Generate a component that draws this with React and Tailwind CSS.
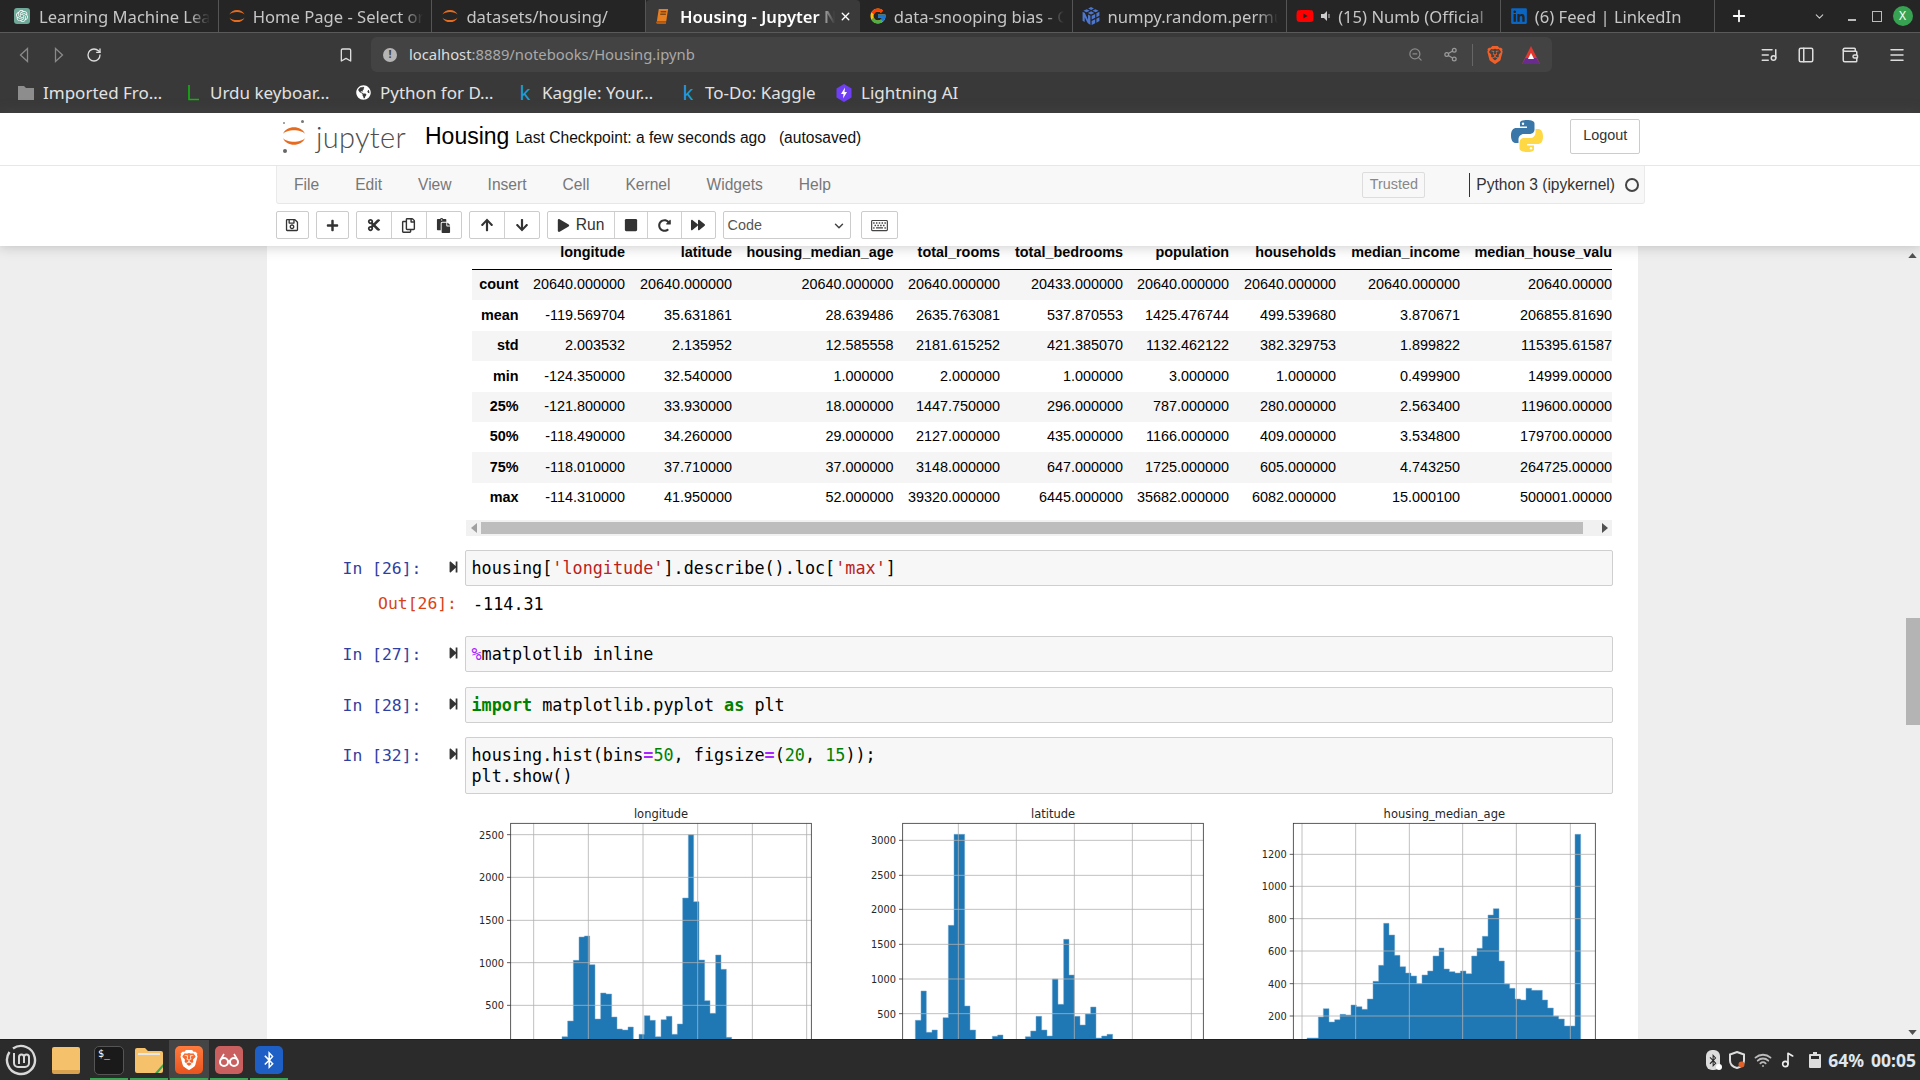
import {
  Bookmark,
  ChevronDown,
  ListMusic,
  Menu,
  Music2,
  PanelLeft,
  Plus,
  RotateCw,
  Share2,
  Wallet,
  Wifi,
  X,
  ZoomOut,
} from "lucide-react";
import {
  FaArrowDown,
  FaArrowUp,
  FaBluetoothB,
  FaCut,
  FaForward,
  FaGlobeAmericas,
  FaLinkedin,
  FaPaste,
  FaPlay,
  FaPlus,
  FaRedoAlt,
  FaRegCopy,
  FaRegKeyboard,
  FaRegSave,
  FaStepForward,
  FaStop,
  FaYoutube,
} from "react-icons/fa";
import { FcGoogle } from "react-icons/fc";
import { SiBrave, SiNumpy, SiOpenai } from "react-icons/si";

const UI_FONT = "font-['Noto_Sans',sans-serif]";
const NB_FONT = "font-['Liberation_Sans',Arial,sans-serif]";
const MONO_FONT = "font-['DejaVu_Sans_Mono',monospace]";

function JupyterArcs({ className }) {
  return (
    <svg viewBox="0 0 26 26" className={className}>
      <path d="M2 11C5 2 21 2 24 11C20 6 6 6 2 11Z" fill="#e66b1f" />
      <path d="M2 15C5 24 21 24 24 15C20 20 6 20 2 15Z" fill="#e66b1f" />
    </svg>
  );
}

const TABS = [
  {
    title: "Learning Machine Lea",
    icon: (
      <span className="flex h-4 w-4 items-center justify-center rounded-[3px] bg-[#6ea999]">
        <SiOpenai className="h-3 w-3 text-white" />
      </span>
    ),
  },
  { title: "Home Page - Select or", icon: <JupyterArcs className="h-[18px] w-[18px]" /> },
  { title: "datasets/housing/", icon: <JupyterArcs className="h-[18px] w-[18px]" /> },
  {
    title: "Housing - Jupyter N",
    active: true,
    icon: (
      <svg viewBox="0 0 16 18" className="h-[17px] w-[15px]">
        <path d="M4 1h10l-2 13H2z" fill="#e67e22" />
        <path d="M2 14h10l-.4 3H2.6a1.6 1.6 0 0 1-.6-3z" fill="#b85c12" />
        <path d="M6 4h6M5.6 6.5h6" stroke="#40260c" strokeWidth="1" />
      </svg>
    ),
  },
  { title: "data-snooping bias - G", icon: <FcGoogle className="h-[18px] w-[18px]" /> },
  { title: "numpy.random.permu", icon: <SiNumpy className="h-[18px] w-[18px] text-[#4d77cf]" /> },
  {
    title: "(15) Numb (Official",
    sound: true,
    icon: <FaYoutube className="h-[18px] w-[18px] text-[#f00]" />,
  },
  { title: "(6) Feed | LinkedIn", icon: <FaLinkedin className="h-[18px] w-[18px] text-[#0a66c2]" /> },
];

function Tab({ tab }) {
  return (
    <div
      className={`flex h-[32px] w-[213.7px] shrink-0 items-center overflow-hidden pl-[9px] pr-2 ${
        tab.active
          ? "rounded-t-[4px] bg-[#3a3a3a] text-white"
          : "border-r border-r-[#555] text-[#c6c6c6]"
      }`}
    >
      <span className="flex w-[25px] shrink-0 items-center">{tab.icon}</span>
      {tab.sound && (
        <svg viewBox="0 0 10 10" className="mr-[7px] h-[10px] w-[10px] shrink-0">
          <path d="M0 3h3l3-3v10L3 7H0z" fill="#ccc" />
          <path d="M8 3v4" stroke="#ccc" />
        </svg>
      )}
      <span
        className={`mt-[2px] min-w-0 flex-1 overflow-hidden whitespace-nowrap text-[16.6px] [mask-image:linear-gradient(to_right,black_88%,transparent)] ${
          tab.active ? "font-semibold" : ""
        }`}
      >
        {tab.title}
      </span>
      {tab.active && <X className="ml-1 h-[13px] w-[13px] shrink-0 text-white" strokeWidth={2.5} />}
    </div>
  );
}

function NavArrow({ flip, className }) {
  return (
    <svg viewBox="0 0 10 16" className={`h-[16px] w-[10px] ${className}`}>
      <path
        d={flip ? "M1.5 1.5L8.5 8L1.5 14.5Z" : "M8.5 1.5L1.5 8L8.5 14.5Z"}
        fill="none"
        stroke="#8a8a8a"
        strokeWidth="1.3"
      />
    </svg>
  );
}

const BOOKMARKS = [
  {
    label: "Imported Fro…",
    width: "w-[167px]",
    icon: (
      <svg viewBox="0 0 18 16" className="h-[16px] w-[18px]">
        <path d="M1 1h6l2 2h8v12H1z" fill="#8d8d8d" />
      </svg>
    ),
  },
  {
    label: "Urdu keyboar…",
    width: "w-[170px]",
    icon: (
      <svg viewBox="0 0 14 16" className="h-[16px] w-[14px]">
        <path d="M3 0v14.5h10" fill="none" stroke="#12b312" strokeWidth="1.6" />
      </svg>
    ),
  },
  { label: "Python for D…", width: "w-[162px]", icon: <FaGlobeAmericas className="h-[15px] w-[15px] text-white" /> },
  {
    label: "Kaggle: Your…",
    width: "w-[163px]",
    icon: <span className="font-['Liberation_Sans',sans-serif] text-[21px] leading-none text-[#1c9dd8]">k</span>,
  },
  {
    label: "To-Do: Kaggle",
    width: "w-[156px]",
    icon: <span className="font-['Liberation_Sans',sans-serif] text-[21px] leading-none text-[#1c9dd8]">k</span>,
  },
  {
    label: "Lightning AI",
    width: "w-[130px]",
    icon: (
      <svg viewBox="0 0 16 18" className="h-[18px] w-[16px]">
        <path d="M8 0l7.5 4.5v9L8 18 .5 13.5v-9z" fill="#6f3ff5" />
        <path d="M9 3.5L5 10h2.5L7 14.5 11 8H8.5z" fill="#fff" />
      </svg>
    ),
  },
];

function BrowserChrome() {
  return (
    <div className={`h-[113px] shrink-0 bg-[#393939] ${UI_FONT}`}>
      <div className="flex h-[33px] items-center border-b border-b-[#5a5a5a] bg-[#252525] pl-[5px]">
        {TABS.map((tab) => (
          <Tab key={tab.title} tab={tab} />
        ))}
        <Plus className="ml-[15px] h-[18px] w-[18px] text-white" strokeWidth={2.4} />
        <ChevronDown className="ml-[65px] h-[13px] w-[13px] text-[#ccc]" />
        <span className="ml-[22px] h-[2px] w-[8px] translate-y-[4px] bg-[#bbb]" />
        <span className="ml-[16px] h-[11px] w-[10px] border border-[#bbb]" />
        <span className="ml-[11px] flex h-[20px] w-[20px] items-center justify-center rounded-full bg-[#37a352] text-[12px] text-white">
          X
        </span>
      </div>
      <div className="flex h-[39px] items-center pt-[4px]">
        <NavArrow className="ml-[19px]" />
        <NavArrow flip className="ml-[25px]" />
        <RotateCw className="ml-[22px] h-[16px] w-[16px] text-[#ddd]" strokeWidth={2} />
        <Bookmark className="ml-[236px] h-[16px] w-[16px] text-[#ddd]" strokeWidth={2} />
        <div className="ml-[17px] flex h-[35px] w-[1181px] items-center rounded-[6px] bg-[#434343] pl-[12px]">
          <span className="flex h-[14px] w-[14px] items-center justify-center rounded-full bg-[#b5b5b5] text-[11px] font-bold text-[#434343]">
            !
          </span>
          <span className="ml-[12px] whitespace-nowrap text-[14.8px] text-[#a9a9a9]">
            <span className="text-[#dddddd]">localhost</span>:8889/notebooks/Housing.ipynb
          </span>
          <ZoomOut className="ml-auto h-[15px] w-[15px] text-[#8a8a8a]" />
          <Share2 className="ml-[20px] h-[15px] w-[15px] text-[#9a9a9a]" />
          <span className="ml-[14px] h-[22px] w-px bg-[#666]" />
          <SiBrave className="ml-[13px] h-[20px] w-[18px] text-[#f2602a]" />
          <svg viewBox="0 0 20 20" className="ml-[17px] mr-[11px] h-[20px] w-[20px]">
            <path d="M10 1L19 19H1z" fill="#e0382e" />
            <path d="M1 19l3.5-6h11l3.5 6z" fill="#6a2b8e" />
            <path d="M10 8l3 6H7z" fill="#fff" />
          </svg>
        </div>
        <ListMusic className="ml-[208px] h-[18px] w-[18px] text-[#ddd]" />
        <PanelLeft className="ml-[19px] h-[18px] w-[18px] text-[#ddd]" />
        <Wallet className="ml-[26px] h-[18px] w-[18px] text-[#ddd]" />
        <Menu className="ml-[29px] h-[18px] w-[18px] text-[#ddd]" />
      </div>
      <div className="flex h-[41px] items-center pl-[17px] text-[17px] text-[#e2e2e2]">
        {BOOKMARKS.map((b) => (
          <div key={b.label} className={`flex items-center gap-[8px] whitespace-nowrap ${b.width}`}>
            <span className="flex w-[18px] shrink-0 justify-center">{b.icon}</span>
            {b.label}
          </div>
        ))}
      </div>
    </div>
  );
}

function PythonLogo() {
  const blue = "M16.5 1C9.5 1 10 4 10 4v3.5h7V9H6.5C3 9 1 11.5 1 16.5S3 24 6 24h2.5v-3.7c0-3 2.5-5.3 5.3-5.3h6.4c2.3 0 4.3-2 4.3-4.2V4.5C24.5 2.5 22 1 16.5 1z";
  return (
    <svg viewBox="0 0 34 34" className="h-[34px] w-[34px]">
      <path d={blue} fill="#3a76a8" />
      <circle cx="13" cy="4.8" r="1.2" fill="#fff" />
      <g transform="rotate(180 17 17)">
        <path d={blue} fill="#ffd845" />
        <circle cx="13" cy="4.8" r="1.2" fill="#fff" />
      </g>
    </svg>
  );
}

function ToolBtn({ children, className = "" }) {
  return (
    <div className={`flex h-full items-center justify-center border-r border-r-[#d0d0d0] text-[#333] last:border-r-0 ${className}`}>
      {children}
    </div>
  );
}

function ToolGroup({ children, className = "" }) {
  return (
    <div className={`flex h-[28px] rounded-[2px] border border-[#ccc] bg-white ${className}`}>{children}</div>
  );
}

function NotebookHeader() {
  return (
    <div className={`relative z-10 h-[133px] shrink-0 bg-white shadow-[0_0_12px_1px_rgba(87,87,87,0.3)] ${NB_FONT}`}>
      <div className="flex h-[53px] items-center border-b border-b-[#e7e7e7] pb-[6px]">
        <div className="relative ml-[281px] h-[33px] w-[26px]">
          <JupyterArcs className="mt-[3px] h-[26px] w-[26px]" />
          <span className="absolute left-[20px] top-0 h-[3px] w-[3px] rounded-full bg-[#777]" />
          <span className="absolute bottom-0 left-[2px] h-[4px] w-[4px] rounded-full bg-[#666]" />
          <span className="absolute left-[2px] top-[2px] h-[2px] w-[2px] rounded-full bg-[#888]" />
        </div>
        <span className="ml-[9px] w-[109px] whitespace-nowrap font-['Lato',sans-serif] text-[29px] font-light leading-none tracking-[0.3px] text-[#4e4e4e]">
          jupyter
        </span>
        <span className="text-[23px] text-black">Housing</span>
        <span className="ml-[6px] mt-[4px] whitespace-nowrap text-[15.6px] text-[#111]">
          Last Checkpoint: a few seconds ago
        </span>
        <span className="ml-[13px] mt-[4px] whitespace-nowrap text-[15.6px] text-[#111]">(autosaved)</span>
        <div className="ml-[649px]">
          <PythonLogo />
        </div>
        <div className="ml-[26px] flex h-[35px] w-[70px] items-center justify-center rounded-[2px] border border-[#ccc] text-[14.4px] text-[#333]">
          Logout
        </div>
      </div>
      <div className="ml-[276px] flex h-[38px] w-[1369px] items-center rounded-b-[3px] border-x border-b border-x-[#eaeaea] border-b-[#e7e7e7] bg-[#f8f8f8] text-[15.6px] text-[#777]">
        <div className="ml-[17px] flex gap-[36px]">
          <span>File</span>
          <span>Edit</span>
          <span>View</span>
          <span>Insert</span>
          <span>Cell</span>
          <span>Kernel</span>
          <span>Widgets</span>
          <span>Help</span>
        </div>
        <div className="ml-auto flex h-[26px] w-[63px] items-center justify-center rounded-[2px] border border-[#ddd] text-[14.4px] text-[#888]">
          Trusted
        </div>
        <span className="ml-[44px] h-[24px] w-px bg-[#333]" />
        <span className="ml-[6px] whitespace-nowrap text-[#333]">Python 3 (ipykernel)</span>
        <span className="ml-[10px] mr-[5px] h-[14px] w-[14px] rounded-full border-2 border-[#444]" />
      </div>
      <div className="ml-[275.6px] mt-[7px] flex items-center gap-[7px]">
        <ToolGroup>
          <ToolBtn className="w-[31px]">
            <FaRegSave className="h-[14px] w-[14px]" />
          </ToolBtn>
        </ToolGroup>
        <ToolGroup>
          <ToolBtn className="w-[31px]">
            <FaPlus className="h-[13px] w-[13px]" />
          </ToolBtn>
        </ToolGroup>
        <ToolGroup>
          <ToolBtn className="w-[35px]">
            <FaCut className="h-[14px] w-[14px]" />
          </ToolBtn>
          <ToolBtn className="w-[35px]">
            <FaRegCopy className="h-[15px] w-[15px]" />
          </ToolBtn>
          <ToolBtn className="w-[34.5px]">
            <FaPaste className="h-[15px] w-[15px]" />
          </ToolBtn>
        </ToolGroup>
        <ToolGroup>
          <ToolBtn className="w-[34.5px]">
            <FaArrowUp className="h-[14px] w-[14px]" />
          </ToolBtn>
          <ToolBtn className="w-[34px]">
            <FaArrowDown className="h-[14px] w-[14px]" />
          </ToolBtn>
        </ToolGroup>
        <ToolGroup>
          <ToolBtn className="w-[67px] gap-[6px] text-[15.6px]">
            <FaPlay className="h-[13px] w-[13px]" />
            Run
          </ToolBtn>
          <ToolBtn className="w-[33px]">
            <FaStop className="h-[14px] w-[14px]" />
          </ToolBtn>
          <ToolBtn className="w-[34px]">
            <FaRedoAlt className="h-[13px] w-[13px]" />
          </ToolBtn>
          <ToolBtn className="w-[33px]">
            <FaForward className="h-[14px] w-[14px]" />
          </ToolBtn>
        </ToolGroup>
        <div className="flex h-[28px] w-[128px] items-center justify-between rounded-[2px] border border-[#ccc] bg-white pl-[4px] pr-[4px] pt-[1px] text-[14.4px] text-[#555]">
          Code
          <ChevronDown className="h-[14px] w-[14px] text-[#444]" strokeWidth={2.5} />
        </div>
        <div className="ml-[3px] flex h-[28px] w-[37px] items-center justify-center rounded-[2px] border border-[#ccc] bg-white text-[#444]">
          <FaRegKeyboard className="h-[15px] w-[17px]" />
        </div>
      </div>
    </div>
  );
}

const COL_WIDTHS = [
  "w-[53.7px]",
  "w-[106.5px]",
  "w-[107px]",
  "w-[161.6px]",
  "w-[106.4px]",
  "w-[123px]",
  "w-[106px]",
  "w-[107px]",
  "w-[124px]",
  "w-[160px]",
];
const COLUMNS = [
  "",
  "longitude",
  "latitude",
  "housing_median_age",
  "total_rooms",
  "total_bedrooms",
  "population",
  "households",
  "median_income",
  "median_house_value",
];
const ROWS = [
  ["count", "20640.000000", "20640.000000", "20640.000000", "20640.000000", "20433.000000", "20640.000000", "20640.000000", "20640.000000", "20640.000000"],
  ["mean", "-119.569704", "35.631861", "28.639486", "2635.763081", "537.870553", "1425.476744", "499.539680", "3.870671", "206855.816909"],
  ["std", "2.003532", "2.135952", "12.585558", "2181.615252", "421.385070", "1132.462122", "382.329753", "1.899822", "115395.615874"],
  ["min", "-124.350000", "32.540000", "1.000000", "2.000000", "1.000000", "3.000000", "1.000000", "0.499900", "14999.000000"],
  ["25%", "-121.800000", "33.930000", "18.000000", "1447.750000", "296.000000", "787.000000", "280.000000", "2.563400", "119600.000000"],
  ["50%", "-118.490000", "34.260000", "29.000000", "2127.000000", "435.000000", "1166.000000", "409.000000", "3.534800", "179700.000000"],
  ["75%", "-118.010000", "37.710000", "37.000000", "3148.000000", "647.000000", "1725.000000", "605.000000", "4.743250", "264725.000000"],
  ["max", "-114.310000", "41.950000", "52.000000", "39320.000000", "6445.000000", "35682.000000", "6082.000000", "15.000100", "500001.000000"],
];

function DescribeTable() {
  return (
    <div className={`ml-[205px] w-[1140px] overflow-hidden ${NB_FONT} text-[14.4px] text-black`}>
      <div className="flex h-[23px] items-start border-b-0">
        {COLUMNS.map((c, i) => (
          <div key={i} className={`shrink-0 whitespace-nowrap pr-[7.2px] text-right font-bold leading-[13px] ${COL_WIDTHS[i]}`}>
            {c}
          </div>
        ))}
      </div>
      <div className="h-px w-full bg-black" />
      {ROWS.map((row, r) => (
        <div key={row[0]} className={`flex h-[30.4px] items-center ${r % 2 === 0 ? "bg-[#f5f5f5]" : ""}`}>
          {row.map((cell, i) => (
            <div
              key={i}
              className={`shrink-0 whitespace-nowrap pr-[7.2px] text-right ${i === 0 ? "font-bold" : ""} ${COL_WIDTHS[i]}`}
            >
              {cell}
            </div>
          ))}
        </div>
      ))}
    </div>
  );
}

function TableScrollbar() {
  return (
    <div className="ml-[199px] mt-[7px] flex h-[16px] w-[1146px] items-center bg-[#f1f1f1]">
      <svg viewBox="0 0 6 10" className="ml-[5px] h-[10px] w-[6px]">
        <path d="M6 0v10L0 5z" fill="#a0a0a0" />
      </svg>
      <div className="ml-[4px] h-[12px] w-[1102px] bg-[#bdbdbd]" />
      <svg viewBox="0 0 6 10" className="ml-[19px] h-[10px] w-[6px]">
        <path d="M0 0v10l6-5z" fill="#505050" />
      </svg>
    </div>
  );
}

function Str({ children }) {
  return <span className="text-[#ba2121]">{children}</span>;
}
function Op({ children }) {
  return <span className="font-bold text-[#aa22ff]">{children}</span>;
}
function Num({ children }) {
  return <span className="text-[#008000]">{children}</span>;
}
function Kw({ children }) {
  return <span className="font-bold text-[#008000]">{children}</span>;
}

function InputCell({ n, height = "h-[36px]", className = "", children }) {
  return (
    <div className={`flex items-start ${MONO_FONT} ${className}`}>
      <div className="mt-[9px] w-[154.5px] text-right text-[16.4px] leading-[20px] text-[#303f9f]">In [{n}]:</div>
      <FaStepForward className="ml-[26px] mt-[10px] h-[14px] w-[11px] text-[#333]" />
      <pre
        className={`ml-[6px] w-[1148px] rounded-[2px] border border-[#cfcfcf] bg-[#f7f7f7] pl-[6px] pt-[7px] font-['DejaVu_Sans_Mono',monospace] text-[16.8px] leading-[20.4px] text-black ${height}`}
      >
        {children}
      </pre>
    </div>
  );
}

function Hist({ title, vbX, left, right, ticks, vgrid, bars, end }) {
  // coordinates are 3x figure pixels, read off the plot
  let outline = `M${bars[0][0]} 730`;
  bars.forEach(([x, y], i) => {
    const next = bars[i + 1];
    outline += `L${x} ${y}L${next ? next[0] : end} ${y}`;
  });
  outline += `L${end} 730Z`;
  return (
    <svg viewBox={`${vbX} 0 1173 717`} className="h-[239px] w-[391px] shrink-0 font-['DejaVu_Sans',sans-serif]">
      <text x={(left + right) / 2} y="54" textAnchor="middle" fontSize="34.5" fill="#262626">
        {title}
      </text>
      <path d={outline} fill="#1f77b4" stroke="#74a9d0" strokeWidth="1.5" />
      {vgrid.map((x) => (
        <line key={x} x1={x} x2={x} y1="70" y2="730" stroke="#b0b0b0" strokeWidth="2.4" />
      ))}
      {ticks.map(([label, y]) => (
        <g key={label}>
          <line x1={left} x2={right} y1={y} y2={y} stroke="#b0b0b0" strokeWidth="2.4" />
          <line x1={left - 11} x2={left} y1={y} y2={y} stroke="#333" strokeWidth="2.4" />
          <text x={left - 20} y={y + 12} textAnchor="end" fontSize="29.4" fill="#262626">
            {label}
          </text>
        </g>
      ))}
      <rect x={left} y="70" width={right - left} height="700" fill="none" stroke="#333" strokeWidth="2.4" />
    </svg>
  );
}

const LONGITUDE_BARS = [[306,710],[323,663],[340,481],[357,411],[373,408],[389,494],[405,657],[422,579],[438,582],[455,651],[471,687],[487,690],[504,681],[520,728],[537,703],[553,647],[570,661],[586,710],[603,659],[619,649],[636,703],[652,672],[668,294],[685,104],[701,305],[717,480],[734,602],[750,640],[767,465],[783,508],[799,712]];
const LATITUDE_BARS = [[106,661],[123,573],[139,697],[156,690],[172,726],[189,653],[205,376],[222,103],[238,103],[254,618],[270,690],[287,726],[337,709],[353,705],[369,726],[436,710],[452,693],[468,649],[485,690],[501,708],[517,537],[534,613],[551,418],[567,525],[583,649],[600,675],[616,642],[632,621],[648,714],[665,708],[681,703]];
const AGE_BARS = [[201,714],[235,651],[250,626],[267,666],[284,659],[300,643],[317,645],[333,615],[349,620],[366,628],[382,597],[399,544],[416,496],[431,370],[447,405],[464,466],[480,500],[497,519],[513,528],[530,551],[546,525],[563,513],[579,468],[597,444],[612,507],[628,515],[645,519],[661,513],[678,521],[695,468],[711,445],[727,409],[744,345],[760,326],[777,483],[793,552],[809,565],[825,597],[842,600],[858,565],[875,571],[907,600],[923,624],[940,648],[956,657],[973,678],[1005,103]];

function Notebook() {
  return (
    <div className="ml-[267px] h-full w-[1371px] shrink-0 overflow-hidden bg-white">
      <DescribeTable />
      <TableScrollbar />
      <InputCell n={26} className="mt-[14px]">
        housing[<Str>'longitude'</Str>].describe().loc[<Str>'max'</Str>]
      </InputCell>
      <div className={`flex h-[36px] items-center ${MONO_FONT}`}>
        <div className="w-[190px] text-right text-[16.4px] text-[#d84315]">Out[26]:</div>
        <div className="ml-[16px] text-[16.8px] text-black">-114.31</div>
      </div>
      <InputCell n={27} className="mt-[14px]">
        <span className="text-[#aa22ff]">%</span>matplotlib inline
      </InputCell>
      <InputCell n={28} className="mt-[15px]">
        <Kw>import</Kw> matplotlib.pyplot <Kw>as</Kw> plt
      </InputCell>
      <InputCell n={32} height="h-[57px]" className="mt-[14px]">
        housing.hist(bins<Op>=</Op>
        <Num>50</Num>, figsize<Op>=</Op>(<Num>20</Num>, <Num>15</Num>));
        {"\n"}plt.show()
      </InputCell>
      <div className="ml-[199px] mt-[6px] flex">
        <Hist
          title="longitude"
          vbX={18}
          left={152}
          right={1054}
          end={815}
          ticks={[[2500,104],[2000,232],[1500,361],[1000,488],[500,616]]}
          vgrid={[221,385,549,713,877,1040]}
          bars={LONGITUDE_BARS}
        />
        <Hist
          title="latitude"
          vbX={-69}
          left={68}
          right={970}
          end={698}
          ticks={[[3000,121],[2500,226],[2000,328],[1500,433],[1000,537],[500,641]]}
          vgrid={[235,409,583,757,934]}
          bars={LATITUDE_BARS}
        />
        <Hist
          title="housing_median_age"
          vbX={24}
          left={160}
          right={1066}
          end={1022}
          ticks={[[1200,163],[1000,259],[800,356],[600,453],[400,551],[200,648]]}
          vgrid={[186,347,508,668,829,991]}
          bars={AGE_BARS}
        />
      </div>
    </div>
  );
}

function PageScrollbar() {
  return (
    <div className="ml-[267px] flex h-full w-[15px] shrink-0 flex-col items-center">
      <svg viewBox="0 0 10 6" className="mt-[7px] h-[5px] w-[9px]">
        <path d="M0 6h10L5 0z" fill="#505050" />
      </svg>
      <div className="mt-[360px] h-[107px] w-[14px] bg-[#b4b4b4]" />
      <svg viewBox="0 0 10 6" className="mb-[4px] mt-auto h-[5px] w-[9px]">
        <path d="M0 0h10L5 6z" fill="#505050" />
      </svg>
    </div>
  );
}

function DockSlot({ running, active, children, className = "w-[40px]" }) {
  return (
    <div className={`relative flex h-full items-center justify-center ${active ? "bg-[#454545]" : ""} ${className}`}>
      {children}
      {running && <span className="absolute bottom-0 left-[1px] right-[1px] h-[2px] bg-[#35a854]" />}
    </div>
  );
}

function Taskbar() {
  return (
    <div className={`flex h-[41px] shrink-0 items-center border-t border-t-[#1f1f1f] bg-[#2b2b2b] ${UI_FONT}`}>
      <div className="flex w-[46px] justify-center pr-[4px]">
        <svg viewBox="0 0 32 32" className="h-[32px] w-[32px]">
          <path d="M8 4.5A14 14 0 1 1 4.5 8" fill="none" stroke="#d8d8d8" strokeWidth="2.4" />
          <path
            d="M9 9v10a4 4 0 0 0 4 4h7a4 4 0 0 0 4-4v-6a2.5 2.5 0 0 0-5 0v6M14 20v-7a2.5 2.5 0 0 1 5 0"
            fill="none"
            stroke="#d8d8d8"
            strokeWidth="2"
          />
        </svg>
      </div>
      <DockSlot>
        <span className="block h-[27px] w-[28px] rounded-[2px] border-b-4 border-b-[#d9a24f] bg-[#f5c26b]" />
      </DockSlot>
      <div className="flex h-full pl-[3px]">
        <DockSlot running className="w-[40px]">
          <span className="flex h-[29px] w-[30px] items-start rounded-[5px] border border-[#555] bg-[#1a1a1a] pl-[3px] font-['DejaVu_Sans_Mono',monospace] text-[10px] leading-[14px] text-white">
            $_
          </span>
        </DockSlot>
        <DockSlot running className="w-[40px]">
          <svg viewBox="0 0 28 26" className="h-[26px] w-[28px]">
            <path d="M0 3a2 2 0 0 1 2-2h8l3 3h13a2 2 0 0 1 2 2v18a2 2 0 0 1-2 2H2a2 2 0 0 1-2-2z" fill="#f5c26b" />
            <path d="M3 6h22v2H3z" fill="#e8e8e8" />
            <path d="M20 26l8-9v3l-5 6z" fill="#35a854" />
          </svg>
        </DockSlot>
        <DockSlot running active className="w-[40px]">
          <span className="flex h-[28px] w-[28px] items-center justify-center rounded-[5px] bg-gradient-to-b from-[#ff7a3c] to-[#e8541e]">
            <SiBrave className="h-[20px] w-[20px] text-white" />
          </span>
        </DockSlot>
        <DockSlot running className="w-[40px]">
          <span className="flex h-[28px] w-[28px] items-center justify-center rounded-[5px] bg-[#c9605f]">
            <svg viewBox="0 0 22 14" className="h-[14px] w-[22px]">
              <circle cx="6" cy="9" r="4" fill="none" stroke="#fff" strokeWidth="2" />
              <circle cx="16" cy="9" r="4" fill="none" stroke="#fff" strokeWidth="2" />
              <path d="M10 8h2M3 6L6 1M19 6L16 1" stroke="#fff" strokeWidth="1.6" />
            </svg>
          </span>
        </DockSlot>
        <DockSlot running className="w-[40px]">
          <span className="flex h-[28px] w-[28px] items-center justify-center rounded-[5px] bg-[#1d5fc4]">
            <FaBluetoothB className="h-[18px] w-[18px] text-white" />
          </span>
        </DockSlot>
      </div>
      <div className="ml-auto flex items-center text-[#dfe6ee]">
        <span className="relative mr-[9px] flex h-[20px] w-[14px] items-center justify-center rounded-[6px] bg-[#ddd]">
          <FaBluetoothB className="h-[13px] w-[10px] text-[#2b2b2b]" />
          <span className="absolute -right-[2px] bottom-0 h-[6px] w-[6px] rounded-full bg-white" />
        </span>
        <svg viewBox="0 0 16 18" className="mr-[9px] h-[18px] w-[16px]">
          <path d="M8 1l7 2.5v6c0 4-3 6.5-7 7.5-4-1-7-3.5-7-7.5v-6z" fill="none" stroke="#ddd" strokeWidth="2" />
          <circle cx="12.5" cy="13.5" r="3" fill="#e0622a" />
        </svg>
        <Wifi className="mr-[8px] h-[18px] w-[18px] text-[#bbb]" strokeWidth={2.5} />
        <Music2 className="mr-[13px] h-[16px] w-[16px] text-[#eee]" strokeWidth={2.5} />
        <svg viewBox="0 0 12 16" className="mr-[7px] h-[16px] w-[12px]">
          <path d="M4 0h4v2h3a1 1 0 0 1 1 1v12a1 1 0 0 1-1 1H1a1 1 0 0 1-1-1V3a1 1 0 0 1 1-1h3z" fill="#ddd" />
          <path d="M2 4h8v3H2z" fill="#2b2b2b" />
        </svg>
        <span className="text-[17.5px] font-bold">64%</span>
        <span className="ml-[7px] mr-[4px] text-[17.5px] font-bold">00:05</span>
      </div>
    </div>
  );
}

export default function App() {
  return (
    <div className="flex h-[1080px] w-[1920px] flex-col overflow-hidden bg-[#eeeeee]">
      <BrowserChrome />
      <NotebookHeader />
      <div className="flex min-h-0 flex-1">
        <Notebook />
        <PageScrollbar />
      </div>
      <Taskbar />
    </div>
  );
}
